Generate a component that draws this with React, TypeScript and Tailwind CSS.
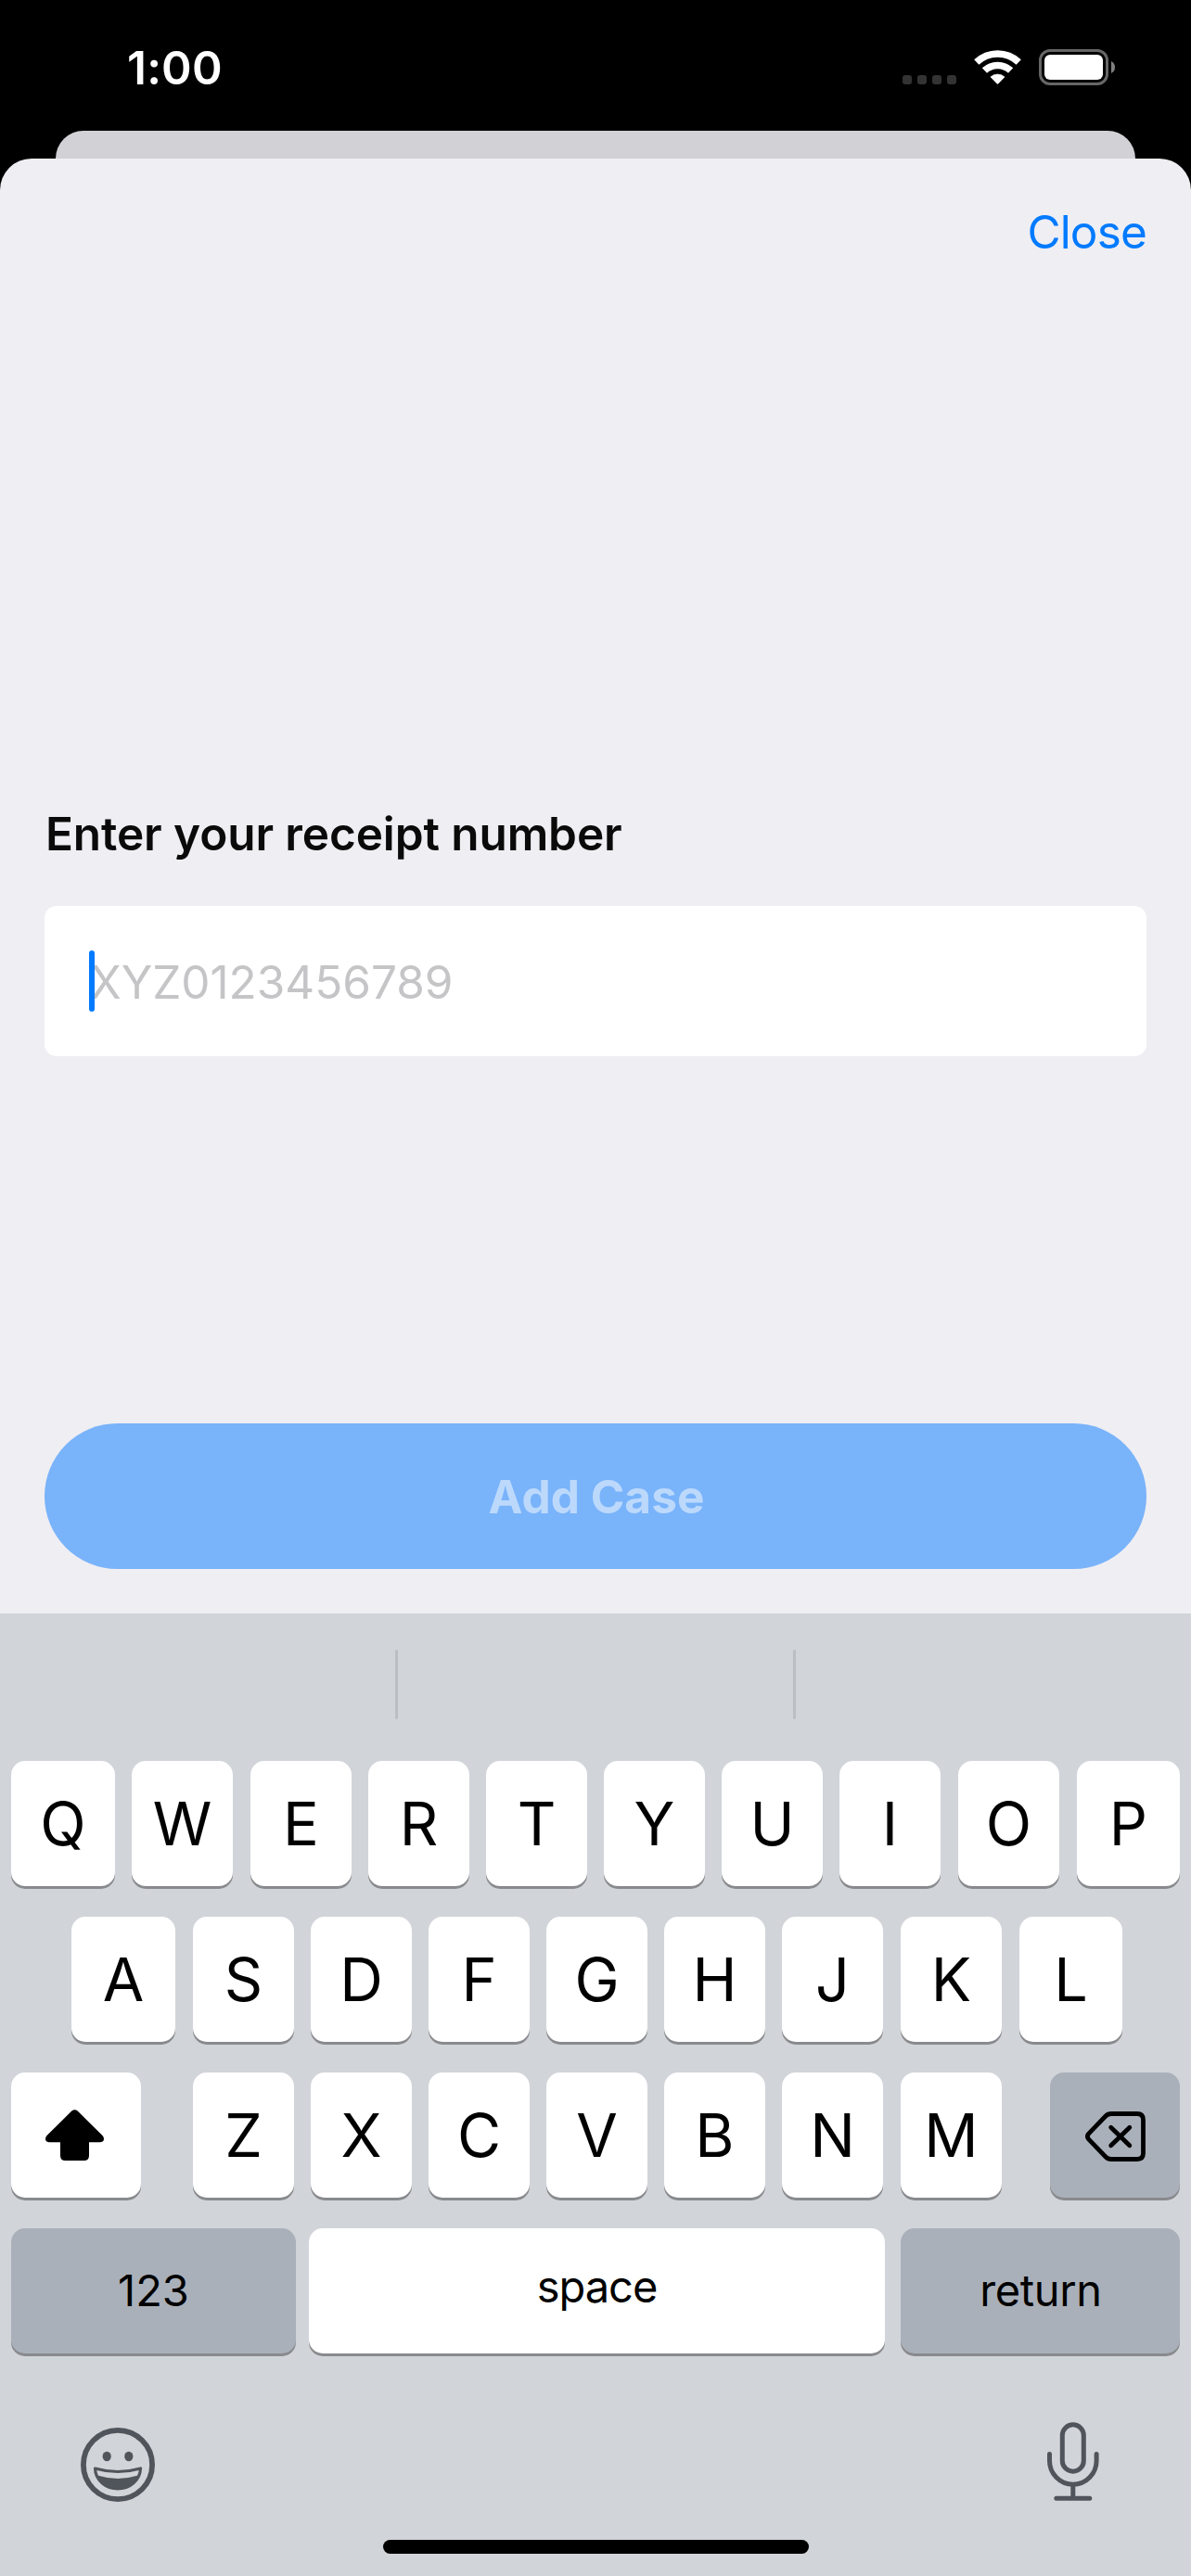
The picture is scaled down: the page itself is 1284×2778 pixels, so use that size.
import type { ReactNode } from 'react';

function SignalDots() {
  return (
    <div className="flex gap-[6px]">
      {[0, 1, 2, 3].map((i) => (
        <span key={i} className="size-[10px] rounded-[3px] bg-[#333333]" />
      ))}
    </div>
  );
}

function WifiIcon() {
  return (
    <svg width="51" height="37" viewBox="0 0 51 37" fill="none">
      <path d="M2.8 13.1A33 33 0 0 1 48.2 13.1" stroke="white" strokeWidth="7.6" />
      <path d="M11.4 22.1A20.5 20.5 0 0 1 39.6 22.1" stroke="white" strokeWidth="7.6" />
      <path d="M17.9 28.9A11.6 11.6 0 0 1 33.1 28.9L26.3 36Q25.5 36.8 24.7 36Z" fill="white" stroke="white" strokeWidth="0.6" strokeLinejoin="round" />
    </svg>
  );
}

function BatteryIcon() {
  return (
    <svg width="82" height="39" viewBox="0 0 82 39" fill="none">
      <rect x="1.5" y="1.5" width="72" height="36" rx="10.5" stroke="#666666" strokeWidth="3" />
      <rect x="6" y="6" width="63" height="27" rx="6" fill="white" />
      <path d="M78 13Q82 15 82 19.5Q82 24 78 26Z" fill="#808080" />
    </svg>
  );
}

function ShiftIcon() {
  return (
    <svg width="63" height="55" viewBox="0 0 63 55" fill="black">
      <path d="M28.3 1.6Q31.5-1.2 34.7 1.6L61.5 28Q63 29.6 63 31.5Q63 35.3 58.5 35.3H47V49.5Q47 55 41.5 55H21.5Q16 55 16 49.5V35.3H4.5Q0 35.3 0 31.5Q0 29.6 1.5 28Z" />
    </svg>
  );
}

function DeleteIcon() {
  return (
    <svg width="65" height="54" viewBox="0 0 65 54" fill="none" stroke="black" strokeWidth="4.8" strokeLinecap="round" strokeLinejoin="round">
      <path d="M28 2.5H56Q62.5 2.5 62.5 9V45Q62.5 51.5 56 51.5H28Q24.5 51.5 22 49L3.8 30.2Q1 27 3.8 23.8L22 5Q24.5 2.5 28 2.5Z" />
      <path d="M27.7 17.2L47.8 36.8M47.8 17.2L27.7 36.8" />
    </svg>
  );
}

function EmojiIcon() {
  return (
    <svg width="80" height="80" viewBox="0 0 80 80" fill="none">
      <circle cx="40" cy="40" r="37.1" stroke="#50555b" strokeWidth="5.8" />
      <ellipse cx="28.2" cy="31" rx="4.6" ry="5.3" fill="#50555b" />
      <ellipse cx="51.8" cy="31" rx="4.6" ry="5.3" fill="#50555b" />
      <path d="M15.5 44Q40 51 64.5 44C64 57 53 66 40 66C27 66 16 57 15.5 44Z" stroke="#50555b" strokeWidth="3.2" strokeLinejoin="round" />
      <path d="M18 51.6Q40 58.4 62 51.6C58 61 50 66.5 40 66.5C30 66.5 22 61 18 51.6Z" fill="#50555b" />
    </svg>
  );
}

function MicIcon() {
  return (
    <svg width="56" height="85" viewBox="0 0 56 85" fill="none" stroke="#50555b" strokeWidth="5" strokeLinecap="round">
      <rect x="16.3" y="2.8" width="23" height="50.4" rx="11.5" />
      <path d="M2.5 34.5V41.7A25.3 25.5 0 0 0 53.1 41.7V34.5" />
      <path d="M27.8 68V82M9.8 82.2H45.8" />
    </svg>
  );
}

type KeyProps = { children: ReactNode; className: string; dark?: boolean };

function Key({ children, className, dark }: KeyProps) {
  return (
    <button
      type="button"
      className={`flex h-[135px] shrink-0 items-center justify-center rounded-[15px] shadow-[0_3px_0_#898a8d] ${dark ? 'bg-[#aab0ba]' : 'bg-white'} ${className}`}
    >
      {children}
    </button>
  );
}

const NUDGED = 'EOPSKLM';

function LetterKey({ letter }: { letter: string }) {
  const width = 'QA'.includes(letter) ? 'w-[112px]' : 'PL'.includes(letter) ? 'w-[111px]' : 'w-[109px]';
  return (
    <Key className={`pt-px text-[64.6px] ${width} ${NUDGED.includes(letter) ? 'ml-px' : ''}`}>{letter}</Key>
  );
}

function Letters({ keys }: { keys: string }) {
  return (
    <div className="flex gap-[18px]">
      {keys.split('').map((k) => (
        <LetterKey key={k} letter={k} />
      ))}
    </div>
  );
}

function Keyboard() {
  return (
    <div className="flex h-[1038px] flex-col bg-[#d1d4d9] text-black">
      <div className="flex h-[159px] shrink-0 justify-center gap-[426px] pt-[39px]">
        <span className="h-[75px] w-[3px] rounded-full bg-[#bbbfc4]" />
        <span className="h-[75px] w-[3px] rounded-full bg-[#bbbfc4]" />
      </div>

      <div className="flex flex-col gap-[33px] px-3">
        <Letters keys="QWERTYUIOP" />
        <div className="pl-[65px]">
          <Letters keys="ASDFGHJKL" />
        </div>
        <div className="flex">
          <Key className="mr-[55px] w-[140px] pr-[3px]">
            <ShiftIcon />
          </Key>
          <div className="pl-px">
            <Letters keys="ZXCVBNM" />
          </div>
          <Key dark className="ml-auto w-[140px] pt-[3px]">
            <DeleteIcon />
          </Key>
        </div>
        <div className="flex">
          <Key dark className="w-[307px] text-[47px]">
            123
          </Key>
          <Key className="ml-[14px] w-[621px] pb-[8px] text-[47px] tracking-[-1px]">space</Key>
          <Key dark className="ml-[17px] w-[301px] pl-px text-[47px] tracking-[-0.4px]">
            return
          </Key>
        </div>
      </div>

      <div className="mt-[74px] flex justify-between pr-[99px] pl-[87px]">
        <div className="pt-[6px]">
          <EmojiIcon />
        </div>
        <MicIcon />
      </div>
      <div className="mt-[41px] ml-[413px] h-[15px] w-[459px] rounded-full bg-black" />
    </div>
  );
}

export default function App() {
  return (
    <div className="flex h-[2778px] w-[1284px] flex-col overflow-hidden bg-black font-['Inter',sans-serif]">
      <header className="flex h-[141px] shrink-0 justify-between pr-[82px] pl-[137px]">
        <span className="pt-[43px] text-[49.5px] leading-[60px] font-semibold tracking-[0.2px] text-white">1:00</span>
        <div className="flex pt-[53px]">
          <div className="mr-[19px] pt-[28px]">
            <SignalDots />
          </div>
          <div className="mr-[19px] pt-px">
            <WifiIcon />
          </div>
          <BatteryIcon />
        </div>
      </header>

      <div className="mx-[60px] h-[30px] shrink-0 rounded-t-[30px] bg-[#d2d1d6]" />

      <main className="flex h-[1569px] shrink-0 flex-col rounded-t-[34px] bg-[#eeeef3] px-[48px]">
        <button type="button" className="mt-[49px] self-end text-[49.5px] leading-[60px] tracking-[-0.85px] text-[#007aff]">
          Close
        </button>
        <label className="mt-[589px] pl-px text-[49.5px] leading-[60px] font-semibold tracking-[-0.1px] text-[#0a0a0a]">
          Enter your receipt number
        </label>
        <div className="mt-[48px] flex h-[162px] items-center rounded-[13px] bg-white pl-[48px]">
          <span className="z-10 h-[66px] w-[6px] rounded-full bg-[#007aff]" />
          <span className="-ml-[5px] pt-px text-[49.5px] leading-[60px] tracking-[-0.05px] text-[#c5c5c7]">XYZ0123456789</span>
        </div>
        <button
          type="button"
          className="mt-[396px] h-[157px] rounded-full bg-[#79b3fa] pt-px pl-[2px] text-[49.5px] font-bold tracking-[0.05px] text-[#bcd9fc]"
        >
          Add Case
        </button>
      </main>

      <Keyboard />
    </div>
  );
}
